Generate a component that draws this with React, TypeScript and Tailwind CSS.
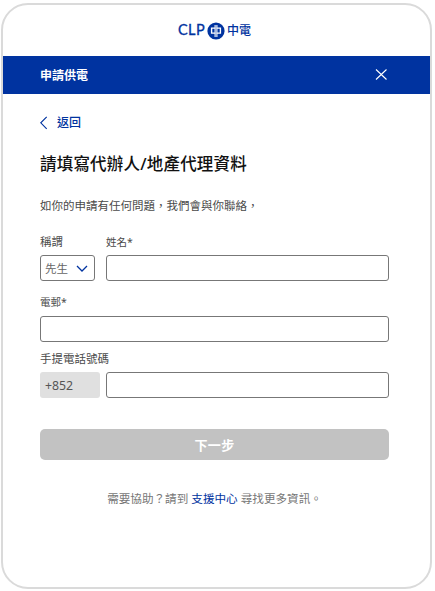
import type { ReactNode } from 'react';

function Logo() {
  return (
    <div className="flex h-[51px] items-center justify-center pr-[4px] text-[#0033a0]">
      <span className="w-[29px] font-['Lato','Noto_Sans_CJK_TC',sans-serif] text-[14.5px] leading-none font-normal tracking-[0.4px] [-webkit-text-stroke:0.3px_#0033a0]">CLP</span>
      <svg className="h-[18px] w-[18px]" viewBox="0 0 18 18" fill="none">
        <circle cx="9" cy="9" r="8.6" fill="#0033a0" />
        <path d="M8.4 6.1H4.6V11.1H8.4M9.6 6.1H13.4V11.1H9.6" stroke="white" strokeWidth="1.4" />
        <path d="M8.1 3V15M9.9 3V15" stroke="white" strokeWidth="1.1" />
      </svg>
      <span className="ml-[2px] text-[12px] leading-none font-medium">中電</span>
    </div>
  );
}

function Label({ children }: { children: ReactNode }) {
  return <div className="h-[18px] text-[11.5px] leading-[18px] whitespace-nowrap text-[#4a4a4a]">{children}</div>;
}

function Field() {
  return <input className="block h-[26px] w-full rounded-[3px] border border-[#777] bg-white px-[5px] text-[12px] outline-none" />;
}

export default function App() {
  return (
    <div className="h-[591px] w-[435px] overflow-hidden bg-white pt-[3px] pl-px font-['Noto_Sans','Noto_Sans_CJK_TC',sans-serif]">
      <main className="h-[586px] w-[431px] overflow-hidden rounded-[27px] border-2 border-[#dadada] bg-white">
        <div className="h-[51px]">
          <Logo />
        </div>
        <header className="flex h-[38px] items-center justify-between bg-[#0033a0] pr-[43px] pl-[37px] text-white">
          <h1 className="mt-px text-[12px] leading-[18px] font-bold">申請供電</h1>
          <svg className="h-[12px] w-[12px]" viewBox="0 0 12 12" fill="none" stroke="white" strokeWidth="1.1">
            <path d="M1 0.5L11.5 10.5M11.5 0.5L1 10.5" />
          </svg>
        </header>

        <section className="flex flex-col pr-[41px] pl-[37px]">
          <a className="mt-[20px] flex h-[18px] items-center text-[12px] leading-[18px] font-medium text-[#0033a0]">
            <svg className="mr-[9px] h-[14px] w-[8px]" viewBox="0 0 8 14" fill="none" stroke="#0033a0" strokeWidth="1.15">
              <path d="M6.7 0.8L0.8 6.8L6.7 12.8" />
            </svg>
            返回
          </a>
          <h2 className="mt-[20px] h-[24px] text-[16.5px] leading-[24px] font-medium tracking-[0.2px] whitespace-nowrap text-[#111]">請填寫代辦人/地產代理資料</h2>
          <p className="mt-[21px] h-[18px] text-[11.5px] leading-[18px] whitespace-nowrap text-[#4a4a4a]">如你的申請有任何問題，我們會與你聯絡，</p>

          <div className="mt-[18px] flex gap-[11px]">
            <div className="w-[55px]">
              <Label>稱謂</Label>
              <button className="mt-[4px] flex h-[26px] w-full items-center justify-between rounded-[3px] border border-[#777] pr-[6px] pl-[4px] text-[11.5px] text-[#666]">
                <span className="mt-px">先生</span>
                <svg className="h-[7px] w-[12px]" viewBox="0 0 12 7" fill="none" stroke="#0033a0" strokeWidth="1.3">
                  <path d="M1 1L6 6L11 1" />
                </svg>
              </button>
            </div>
            <div className="flex-1">
              <div className="h-[18px] text-[10.5px] leading-[18px] text-[#4a4a4a]">姓名*</div>
              <div className="mt-[4px]"><Field /></div>
            </div>
          </div>

          <div className="mt-[12px]">
            <div className="h-[18px] text-[10.5px] leading-[18px] text-[#4a4a4a]">電郵*</div>
            <div className="mt-[5px]"><Field /></div>
          </div>

          <div className="mt-[8px]">
            <Label>手提電話號碼</Label>
            <div className="mt-[4px] flex gap-[6px]">
              <div className="h-[26px] w-[60px] rounded-[3px] bg-[#e0e0e0] pl-[5px] text-[12.3px] leading-[27px] text-[#555]">+852</div>
              <div className="flex-1"><Field /></div>
            </div>
          </div>

          <button className="mt-[31px] h-[31px] w-full rounded-[5px] bg-[#c2c2c2] text-[13px] leading-[32px] font-bold tracking-[0.3px] text-white">下一步</button>

          <p className="mt-[30px] flex h-[18px] justify-center gap-[3px] text-[11.6px] leading-[18px] whitespace-nowrap text-[#777]">
            <span>需要協助？請到</span>
            <a className="text-[#0033a0]">支援中心</a>
            <span>尋找更多資訊。</span>
          </p>
        </section>
      </main>
    </div>
  );
}
